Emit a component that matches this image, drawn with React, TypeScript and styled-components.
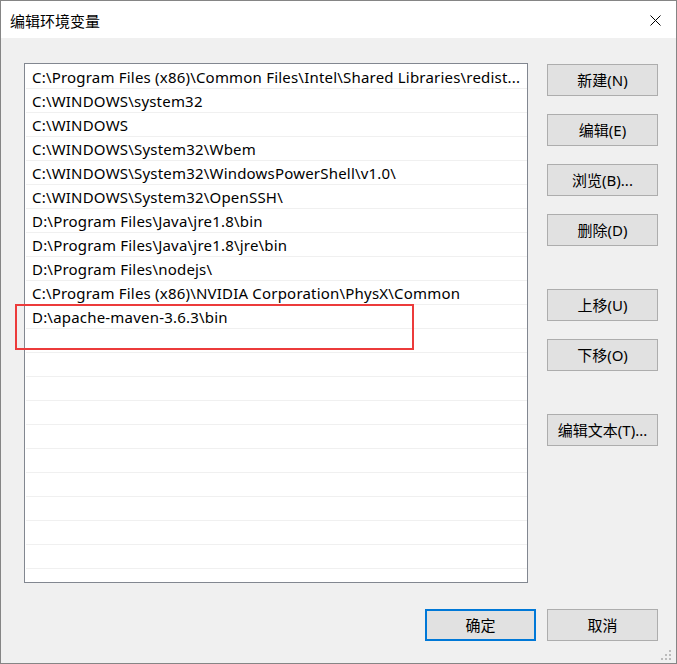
import React from "react";
import styled, { createGlobalStyle } from "styled-components";

const GlobalStyle = createGlobalStyle`
  html, body { margin: 0; padding: 0; background: #ffffff; }
  * { box-sizing: border-box; }
`;

const FONT = `"Noto Sans", "Noto Sans CJK SC", sans-serif`;

const Window = styled.div`
  position: relative;
  width: 677px;
  height: 664px;
  border: 1px solid #858585;
  background: #f0f0f0;
  display: flex;
  flex-direction: column;
  font-family: ${FONT};
  font-size: 15px;
  color: #000;
`;

const TitleBar = styled.div`
  height: 37px;
  background: #ffffff;
  display: flex;
  align-items: center;
  justify-content: space-between;
  padding-left: 9px;
  padding-right: 15px;
  flex-shrink: 0;
`;

const Title = styled.span`
  font-family: "Noto Sans CJK SC", sans-serif;
  font-size: 15px;
  line-height: 1;
  margin-top: 1px;
`;

const CloseIcon = styled.svg`
  width: 11px;
  height: 11px;
  display: block;
  margin-top: 1px;
`;

const Body = styled.div`
  flex: 1;
  display: flex;
  flex-direction: column;
  padding: 25px 18px 22px 23px;
`;

const MainRow = styled.div`
  display: flex;
  gap: 19px;
`;

const ListBox = styled.div`
  width: 504px;
  height: 520px;
  border: 1px solid #828790;
  background: #ffffff;
  padding-top: 1px;
  overflow: hidden;
`;

const Row = styled.div`
  height: 24px;
  margin: 0 0 0 1px;
  border-bottom: 1px solid #f0f0f0;
  padding: 1px 0 0 6px;
  display: flex;
  align-items: center;
  white-space: nowrap;
  overflow: hidden;
  line-height: 1;
  letter-spacing: 0.2px;
`;

const SideButtons = styled.div`
  display: flex;
  flex-direction: column;
  padding-top: 1px;
`;

const Button = styled.button<{ $gap?: number; $primary?: boolean }>`
  width: 111px;
  height: 32px;
  margin-top: ${(p) => p.$gap ?? 0}px;
  background: #e1e1e1;
  border: ${(p) => (p.$primary ? "2px solid #0078d7" : "1px solid #adadad")};
  font-family: ${FONT};
  font-size: 15px;
  color: #000;
  padding: 0;
  display: flex;
  align-items: center;
  justify-content: center;
  line-height: 1;
  cursor: default;
`;

const Footer = styled.div`
  display: flex;
  justify-content: flex-end;
  gap: 11px;
  margin-top: 26px;
`;

const Highlight = styled.div`
  position: absolute;
  left: 14px;
  top: 303px;
  width: 399px;
  height: 46px;
  border: 2px solid #ec3b3b;
  pointer-events: none;
`;

const Grip = styled.svg`
  position: absolute;
  right: 3px;
  bottom: 1px;
  width: 12px;
  height: 12px;
`;

const paths = [
  "C:\\Program Files (x86)\\Common Files\\Intel\\Shared Libraries\\redist...",
  "C:\\WINDOWS\\system32",
  "C:\\WINDOWS",
  "C:\\WINDOWS\\System32\\Wbem",
  "C:\\WINDOWS\\System32\\WindowsPowerShell\\v1.0\\",
  "C:\\WINDOWS\\System32\\OpenSSH\\",
  "D:\\Program Files\\Java\\jre1.8\\bin",
  "D:\\Program Files\\Java\\jre1.8\\jre\\bin",
  "D:\\Program Files\\nodejs\\",
  "C:\\Program Files (x86)\\NVIDIA Corporation\\PhysX\\Common",
  "D:\\apache-maven-3.6.3\\bin",
];

const TOTAL_ROWS = 22;

const sideButtons: { label: string; gap: number }[] = [
  { label: "新建(N)", gap: 0 },
  { label: "编辑(E)", gap: 18 },
  { label: "浏览(B)...", gap: 18 },
  { label: "删除(D)", gap: 18 },
  { label: "上移(U)", gap: 43 },
  { label: "下移(O)", gap: 18 },
  { label: "编辑文本(T)...", gap: 43 },
];

export default function App() {
  const rows = Array.from({ length: TOTAL_ROWS }, (_, i) => paths[i] ?? "");
  return (
    <>
      <GlobalStyle />
      <Window>
        <TitleBar>
          <Title>编辑环境变量</Title>
          <CloseIcon viewBox="0 0 11 11">
            <path d="M0.5 0.5 L10.5 10.5 M10.5 0.5 L0.5 10.5" stroke="#000" strokeWidth="1" fill="none" />
          </CloseIcon>
        </TitleBar>
        <Body>
          <MainRow>
            <ListBox>
              {rows.map((r, i) => (
                <Row key={i}>{r}</Row>
              ))}
            </ListBox>
            <SideButtons>
              {sideButtons.map((b) => (
                <Button key={b.label} $gap={b.gap}>
                  {b.label}
                </Button>
              ))}
            </SideButtons>
          </MainRow>
          <Footer>
            <Button $primary>确定</Button>
            <Button>取消</Button>
          </Footer>
        </Body>
        <Highlight />
        <Grip viewBox="0 0 12 12">
          <rect x="8" y="0" width="2" height="2" fill="#bcbcbc" />
          <rect x="4" y="4" width="2" height="2" fill="#bcbcbc" />
          <rect x="8" y="4" width="2" height="2" fill="#bcbcbc" />
          <rect x="0" y="8" width="2" height="2" fill="#bcbcbc" />
          <rect x="4" y="8" width="2" height="2" fill="#bcbcbc" />
          <rect x="8" y="8" width="2" height="2" fill="#bcbcbc" />
        </Grip>
      </Window>
    </>
  );
}
